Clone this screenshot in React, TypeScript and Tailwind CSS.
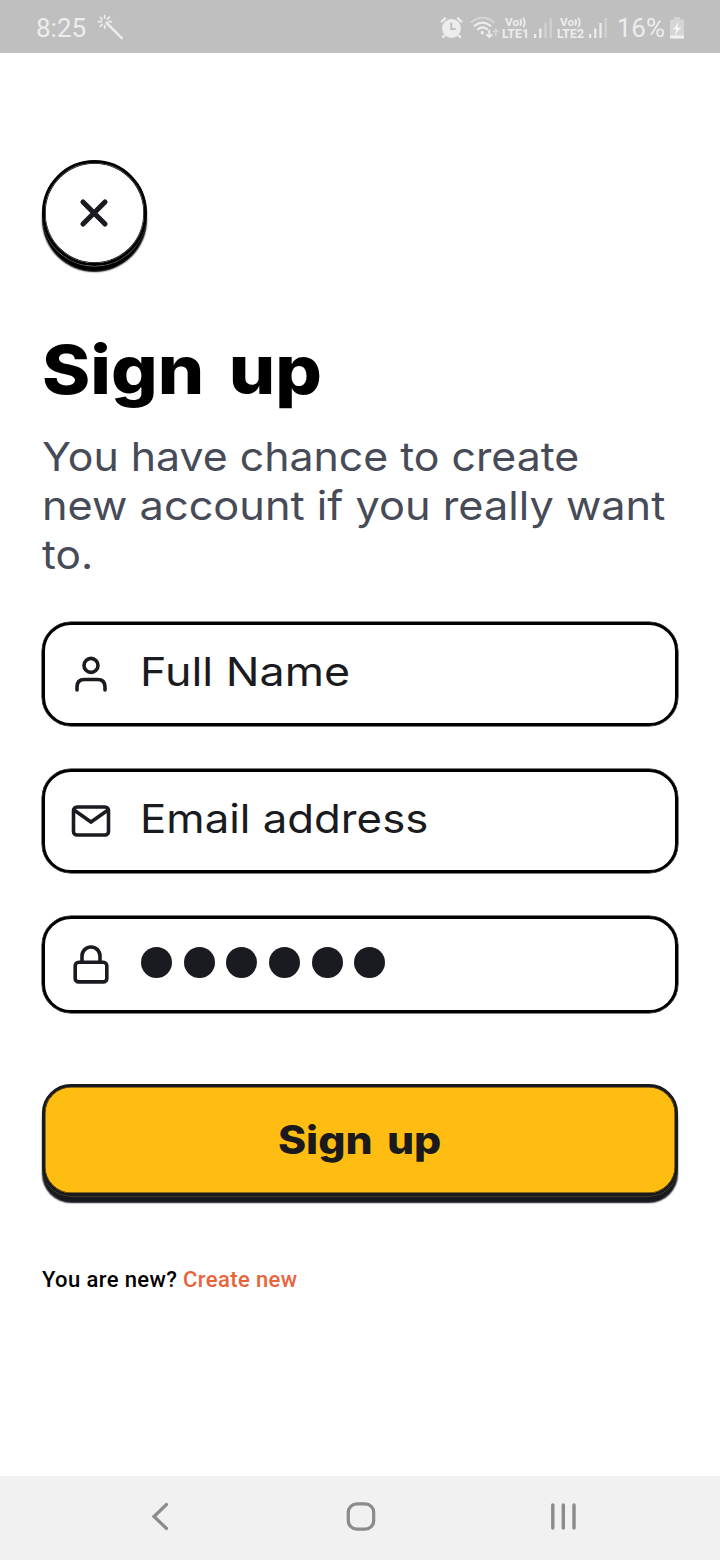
import React from "react";

function MagicWandIcon() {
  return (
    <svg width="28" height="28" viewBox="0 0 28 28" fill="none" stroke="#ededed" strokeWidth="1.7" strokeLinecap="round">
      <path d="M9.5 8.8L24.8 24.2" strokeWidth="2.4" />
      <path d="M7.700 1.500v2.600M7.700 11.500v2.600M1.500 7.700h3M11.500 7.700h3M3.300 3.400l1.900 1.900M12.300 3.200l-1.900 1.900M3.300 12.300l1.900-1.900" />
    </svg>
  );
}

function AlarmIcon() {
  return (
    <svg width="24" height="24" viewBox="0 0 24 24" fill="none">
      <circle cx="12.500" cy="12.500" r="9.400" fill="#ededed" />
      <path d="M2.100 6.200L6.700 1.800M22.900 6.200L18.300 1.800M6 19L3.300 21.600M19 19L21.700 21.600" stroke="#ededed" strokeWidth="2.400" />
      <path d="M12.200 6.500V13H16.700" stroke="#bfbfbf" strokeWidth="2" />
    </svg>
  );
}

function WifiIcon() {
  return (
    <svg width="29" height="24" viewBox="0 0 29 24" fill="none" strokeWidth="2" strokeLinecap="round">
      <path d="M1.500 6Q12.500 -2.500 23.500 6" stroke="#d5d5d5" />
      <path d="M4.500 9.800Q12.500 3.500 20.500 9.800M7.800 13.300Q12.500 9.500 17.200 13.300" stroke="#ededed" />
      <circle cx="12.300" cy="16.700" r="1.700" fill="#ededed" />
      <path d="M19.300 14.500V21M16.900 18.800L19.300 21.200L21.700 18.800" stroke="#ededed" strokeWidth="1.900" />
      <path d="M25.800 19.500V13.500M23.500 15.700L25.800 13.400L28 15.700" stroke="#d5d5d5" strokeWidth="1.700" />
    </svg>
  );
}

function LteLabel({ line }: { line: string }) {
  return (
    <svg width="28" height="24" viewBox="0 0 28 24" fill="#ededed" fontFamily="Roboto, sans-serif" fontWeight="700">
      <text x="3" y="10" fontSize="11" textLength="14" lengthAdjust="spacingAndGlyphs">Vo</text>
      <path d="M18.200 3.200q1.900 3 0 6.500M21.200 1.600q3 5 0 9.600" stroke="#ededed" strokeWidth="1.700" fill="none" />
      <text x="0" y="22" fontSize="12.300" textLength="27" lengthAdjust="spacingAndGlyphs">{line}</text>
    </svg>
  );
}

function SignalIcon({ strong }: { strong?: boolean }) {
  return (
    <svg width="18" height="22" viewBox="0 0 18 22">
      <rect x="0" y="17" width="2.200" height="4" fill="#ededed" />
      <rect x="5.200" y="11.500" width="2.200" height="9.500" fill="#ededed" />
      <rect x="10.400" y="6" width="2.200" height="15" fill={strong ? "#ededed" : "#d2d2d2"} />
      <rect x="15.600" y="1" width="2.200" height="20" fill="#d2d2d2" />
    </svg>
  );
}

function BatteryIcon() {
  return (
    <svg width="14" height="22" viewBox="0 0 14 22">
      <path d="M4 0h6v2.500h3a1 1 0 0 1 1 1V20.500a1 1 0 0 1-1 1H1a1 1 0 0 1-1-1V3.500a1 1 0 0 1 1-1h3z" fill="#d5d5d5" />
      <path d="M0 18.500h14v2a1 1 0 0 1-1 1H1a1 1 0 0 1-1-1z" fill="#f2f2f2" />
      <path d="M8.500 5L3 12.500h3.200L4.800 18.500L11.200 10.500H7.800z" fill="#f4f4f4" />
    </svg>
  );
}

function StatusBar() {
  return (
    <header className="flex h-[53px] shrink-0 items-center bg-[#bfbfbf] px-9 pt-[3px] font-[Roboto,sans-serif] text-[26px] text-[#ededed]">
      <span className="w-[51px] whitespace-nowrap">8:25</span>
      <span className="ml-[10px]"><MagicWandIcon /></span>
      <div className="ml-auto flex items-center">
        <AlarmIcon />
        <span className="ml-[7px]"><WifiIcon /></span>
        <span className="ml-[3px]"><LteLabel line="LTE1" /></span>
        <span className="ml-[4px]"><SignalIcon /></span>
        <span className="ml-[5px]"><LteLabel line="LTE2" /></span>
        <span className="ml-[4px]"><SignalIcon strong /></span>
        <span className="mr-[5px] ml-[10px] whitespace-nowrap">16%</span>
        <BatteryIcon />
      </div>
    </header>
  );
}

function PersonIcon() {
  return (
    <svg width="42" height="42" viewBox="0 0 42 42" fill="none" stroke="#1a1b20" strokeWidth="3.600" strokeLinecap="round">
      <circle cx="21" cy="12.400" r="7" />
      <path d="M7 37V34Q7 26.500 14.500 26.500H27.500Q35 26.500 35 34V37" />
    </svg>
  );
}

function MailIcon() {
  return (
    <svg width="42" height="42" viewBox="0 0 42 42" fill="none" stroke="#1a1b20" strokeWidth="3.600" strokeLinejoin="round">
      <rect x="3.500" y="7" width="35" height="28" rx="3.500" />
      <path d="M4 10L21 22L38 10" strokeLinejoin="miter" />
    </svg>
  );
}

function LockIcon() {
  return (
    <svg width="42" height="42" viewBox="0 0 42 42" fill="none" stroke="#1a1b20" strokeWidth="3.600">
      <rect x="5.200" y="18.300" width="31.600" height="19.600" rx="3.500" />
      <path d="M12 18V12a9 9 0 0 1 18 0V18" />
    </svg>
  );
}

function Field({ icon, className, children }: { icon: React.ReactNode; className: string; children: React.ReactNode }) {
  return (
    <div className={`flex w-full items-center rounded-[29px] border-3 border-black pl-[25px] shadow-[0_0_0_0.5px_#000] ${className}`}>
      {icon}
      {children}
    </div>
  );
}

export default function App() {
  return (
    <div className="flex h-[1560px] w-[720px] flex-col overflow-hidden bg-white font-[Inter,sans-serif]">
      <StatusBar />
      <main className="flex flex-1 flex-col items-start px-[42px] pt-[107px]">
        <button className="flex h-[106px] w-[105px] shrink-0 items-center justify-center rounded-full border-3 border-black bg-white shadow-[inset_0_0_0_0.7px_#000,0_0.6px_0_#8a8a8a,0_6px_1.5px_#000]">
          <svg className="-ml-px" width="30" height="30" viewBox="0 0 30 30" stroke="#1a1b20" strokeWidth="5.200" strokeLinecap="round">
            <path d="M4 4L26 26M26 4L4 26" />
          </svg>
        </button>

        <h1 className="mt-[64px] h-[80px] text-[67px] leading-[80px] font-extrabold whitespace-nowrap text-black">
          <span className="inline-block origin-left scale-x-[1.092] [word-spacing:7.7px]">Sign up</span>
        </h1>
        <p className="mt-[22px] text-[40px] leading-[49px] whitespace-nowrap text-[#474a57]">
          <span className="block w-fit origin-left scale-x-[1.07]">You have chance to create</span>
          <span className="block w-fit origin-left scale-x-[1.082]">new account if you really want</span>
          <span className="block w-fit origin-left scale-x-[1.06]">to.</span>
        </p>

        <Field className="mt-[43px] h-[104px]" icon={<PersonIcon />}>
          <span className="-mt-[4px] ml-[28px] inline-block origin-left scale-x-[1.12] text-[40px] whitespace-nowrap text-[#1a1b20]">Full Name</span>
        </Field>
        <Field className="mt-[43px] h-[104px]" icon={<MailIcon />}>
          <span className="-mt-[4px] ml-[28px] inline-block origin-left scale-x-[1.094] text-[40px] whitespace-nowrap text-[#1a1b20]">Email address</span>
        </Field>
        <Field className="mt-[43px] h-[97px]" icon={<LockIcon />}>
          <span className="-mt-[4px] ml-[29px] flex gap-[11.700px]">
            {[0, 1, 2, 3, 4, 5].map((dot) => (
              <i key={dot} className="size-[31px] rounded-full bg-[#1a1b20]" />
            ))}
          </span>
        </Field>

        <button className="mt-[71px] flex h-[112px] w-full items-center justify-center rounded-[29px] border-3 border-[#1a1a1c] bg-[#ffbd12] pt-px text-[39px] font-extrabold text-[#1a1a1c] shadow-[inset_0_0_0_0.5px_#1a1a1c,0_0.5px_0_#6b5a30,0_7px_1.5px_#18191f]">
          <span className="inline-block scale-x-[1.095] [word-spacing:4.5px]">Sign up</span>
        </button>

        <p className="mt-[70px] font-[Roboto,sans-serif] text-[22px] leading-7 font-medium tracking-[0.38px] whitespace-nowrap text-black">
          You are new? <a className="text-[#e9633b]">Create new</a>
        </p>
      </main>

      <nav className="flex h-[84px] shrink-0 items-center justify-between bg-[#f1f1f1] pr-[143px] pb-[4px] pl-[150px]">
        <svg width="20" height="30" viewBox="0 0 20 30" fill="none" stroke="#8b8b8b" strokeWidth="3.200" strokeLinecap="round">
          <path d="M16.500 3.500L4 15.500L16.500 27.500" />
        </svg>
        <svg className="ml-[3px]" width="30" height="30" viewBox="0 0 30 30" fill="none" stroke="#8b8b8b" strokeWidth="3.200">
          <rect x="2.300" y="2.800" width="25.400" height="25.400" rx="8.500" />
        </svg>
        <svg width="28" height="30" viewBox="0 0 28 30" stroke="#8b8b8b" strokeWidth="3.400" strokeLinecap="round">
          <path d="M3.800 4V27M14.300 4V27M25 4V27" />
        </svg>
      </nav>
    </div>
  );
}
